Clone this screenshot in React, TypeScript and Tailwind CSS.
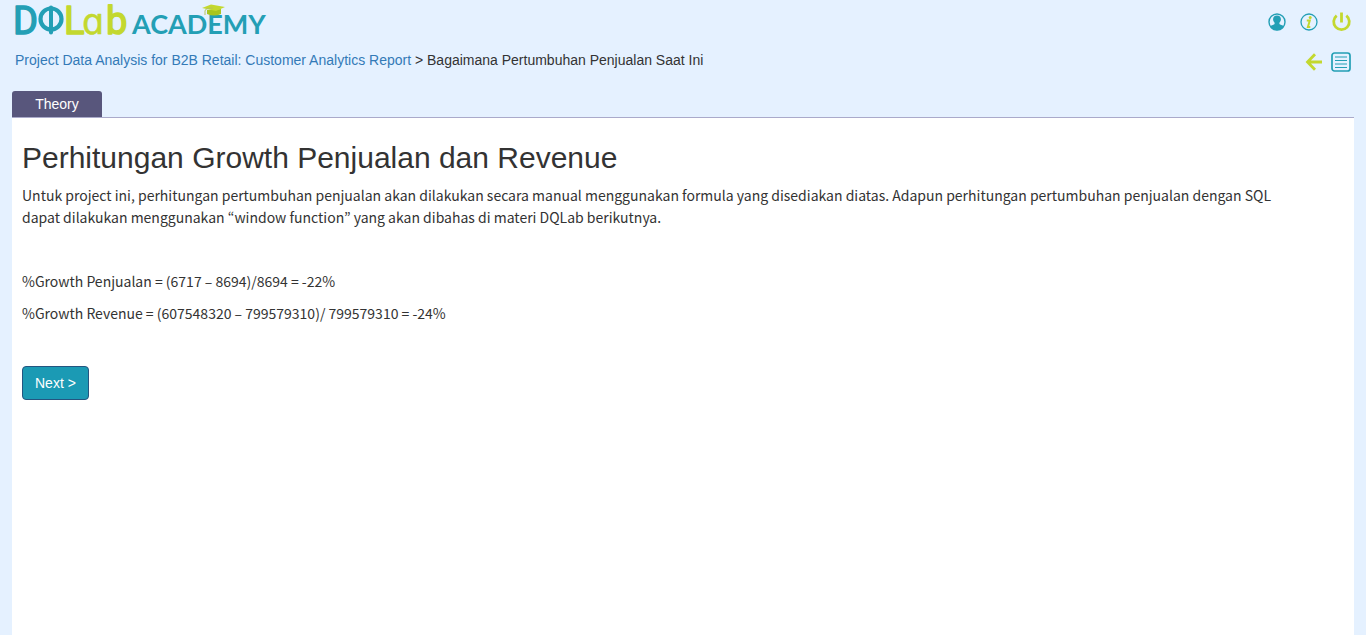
function Logo() {
  return (
    <svg width="256" height="44" viewBox="0 0 256 44" role="img" aria-label="DQLab Academy" className="overflow-visible">
      <g fontFamily="Roboto, sans-serif" fontSize="38" strokeWidth="1.500" strokeLinejoin="round">
        <text x="-2" y="34" fill="#239fb5" stroke="#239fb5">D</text>
        <g fill="#c3d82f" stroke="#c3d82f">
          <text x="49" y="34">L</text>
          <text x="67" y="34" fontFamily="'DejaVu Sans', sans-serif" fontSize="35" strokeWidth="0.500">{"\u0251"}</text>
          <text x="91" y="34">b</text>
        </g>
      </g>
      <ellipse cx="36" cy="19" rx="10.500" ry="10.500" fill="none" stroke="#239fb5" strokeWidth="4.200" />
      <path d="M36 7.500V32.500" stroke="#239fb5" strokeWidth="4" strokeLinecap="round" />
      <text x="117" y="34" fontFamily="Lato, sans-serif" fontSize="27" fontWeight="700" fill="#239fb5">
        ACADEMY
      </text>
      <path d="M192 10v4q7 3 14 0V9z" fill="#a9c51f" />
      <path d="M187 8l9-3.500 14 2.500-9 4z" fill="#c3d82f" />
      <path d="M198 8q-8 0-8 3v4" fill="none" stroke="#b7c35a" strokeWidth="1" />
    </svg>
  );
}

function UserIcon() {
  return (
    <svg width="18" height="18" viewBox="0 0 18 18" aria-hidden="true">
      <circle cx="9" cy="9" r="8" fill="#e5f1ff" stroke="#239fb5" strokeWidth="1.400" />
      <path d="M9 2.600c-2.700 0-4.100 1.700-3.900 4 .1 1.400.7 2.500 1.500 3.200v1.200c-.5 1-3 1-4.800 2.300C3.500 16 6 17.200 9 17.200s5.500-1.200 7.200-3.900C14.400 12 11.900 12 11.400 11V9.800c.8-.7 1.400-1.800 1.500-3.200.2-2.300-1.200-4-3.900-4z" fill="#239fb5" />
    </svg>
  );
}

function InfoIcon() {
  return (
    <svg width="18" height="18" viewBox="0 0 18 18" aria-hidden="true">
      <circle cx="9" cy="9" r="8" fill="none" stroke="#239fb5" strokeWidth="1.300" />
      <circle cx="10.200" cy="4.500" r="1.500" fill="#c3d82f" />
      <path d="M6.800 7.500h3L7.900 14h2.400" fill="none" stroke="#c3d82f" strokeWidth="2" />
    </svg>
  );
}

function PowerIcon() {
  return (
    <svg width="20" height="20" viewBox="0 0 20 20" fill="none" stroke="#c3d82f" strokeWidth="2.800" aria-hidden="true">
      <path d="M5.700 3.700a7.800 7.800 0 1 0 9.600 0M10.500 .5v10" />
    </svg>
  );
}

function BackIcon() {
  return (
    <svg width="18" height="18" viewBox="0 0 18 18" fill="none" stroke="#c3d82f" strokeWidth="2.800" aria-hidden="true">
      <path d="M17 9H3M10 1.200L2.500 9l7.500 7.800" />
    </svg>
  );
}

function ListIcon() {
  return (
    <svg width="20" height="20" viewBox="0 0 20 20" fill="none" stroke="#239fb5" aria-hidden="true">
      <rect x="1" y="1" width="18" height="18" rx="2.500" strokeWidth="1.700" />
      <path d="M4 5h12M4 8.500h12M4 12h12M4 15.500h12" strokeWidth="1.200" />
    </svg>
  );
}

export default function App() {
  return (
    <div className="flex min-h-screen flex-col bg-[#e5f1ff] px-3 font-['Liberation_Sans',Arial,sans-serif] text-sm text-[#333]">
      <header className="flex flex-col px-[3px]">
        <div className="flex h-11 items-center justify-between">
          <a href="#home" className="block">
            <Logo />
          </a>
          <nav aria-label="Account" className="flex items-center gap-3">
            <a href="#profile" aria-label="Profile" className="flex w-5 justify-center">
              <UserIcon />
            </a>
            <a href="#info" aria-label="Information" className="flex w-5 justify-center">
              <InfoIcon />
            </a>
            <a href="#logout" aria-label="Log out">
              <PowerIcon />
            </a>
          </nav>
        </div>
        <div className="flex h-9 items-center justify-between">
          <nav aria-label="Breadcrumb" className="pb-1">
            <a href="#project" className="text-[#337ab7]">
              Project Data Analysis for B2B Retail: Customer Analytics Report
            </a>
            {" > "}
            <span>Bagaimana Pertumbuhan Penjualan Saat Ini</span>
          </nav>
          <div className="flex items-center gap-2">
            <a href="#back" aria-label="Back">
              <BackIcon />
            </a>
            <button type="button" aria-label="Contents">
              <ListIcon />
            </button>
          </div>
        </div>
      </header>
      <div role="tablist" className="mt-[11px] flex">
        <button
          type="button"
          role="tab"
          id="theory-tab"
          aria-selected="true"
          aria-controls="theory"
          className="h-[26px] w-[90px] rounded-t-[3px] bg-[#58567c] text-white"
        >
          Theory
        </button>
      </div>
      <main id="theory" role="tabpanel" aria-labelledby="theory-tab" className="flex-1 border-t border-[#aaaaca] bg-white px-2.5 pt-5">
        <h1 className="text-[30px] leading-10">Perhitungan Growth Penjualan dan Revenue</h1>
        <div className="mt-1.5 max-w-[1284px] font-['Noto_Sans_CJK_KR',sans-serif] text-[14px] leading-[22px]">
          <p>
            Untuk project ini, perhitungan pertumbuhan penjualan akan dilakukan secara manual menggunakan formula yang disediakan diatas. Adapun
            perhitungan pertumbuhan penjualan dengan SQL dapat dilakukan menggunakan “window function” yang akan dibahas di materi DQLab
            berikutnya.
          </p>
          <p className="mt-[42px]">%Growth Penjualan = (6717 – 8694)/8694 = -22%</p>
          <p className="mt-2.5">%Growth Revenue = (607548320 – 799579310)/ 799579310 = -24%</p>
        </div>
        <button type="button" className="mt-[42px] rounded border border-[#245580] bg-[#1b9ab4] px-3 py-1.5 text-white">
          Next &gt;
        </button>
      </main>
    </div>
  );
}
